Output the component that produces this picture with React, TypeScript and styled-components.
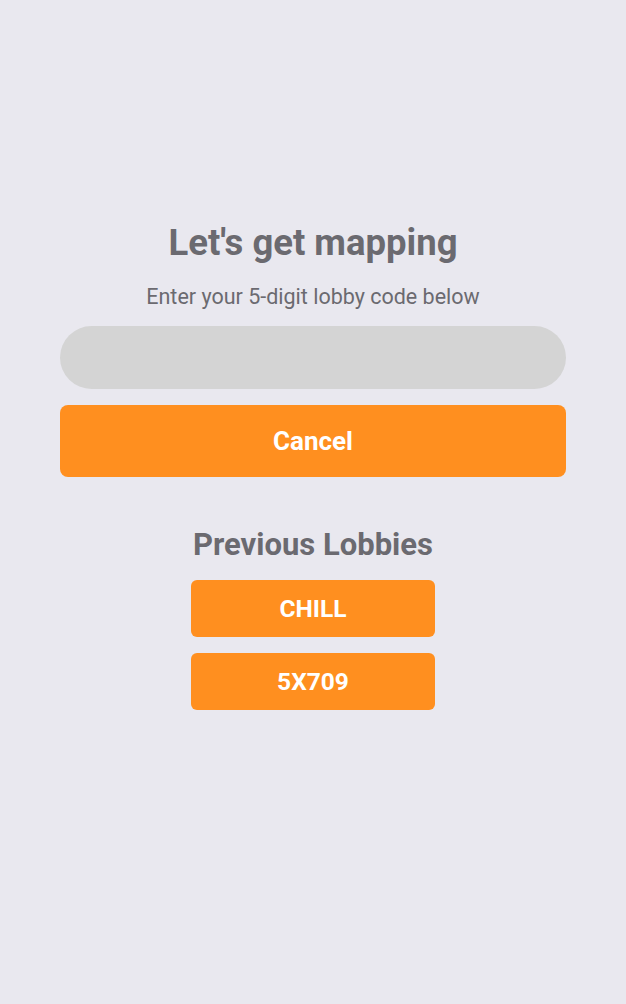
import React, { useState } from 'react';
import styled, { createGlobalStyle } from 'styled-components';

const GlobalStyle = createGlobalStyle`
  html, body {
    margin: 0;
    padding: 0;
    background-color: #e9e8ef;
    font-family: Roboto, "Liberation Sans", sans-serif;
  }
`;

const App = () => {
  const [code, setCode] = useState('');
  const lobbies = ['CHILL', '5X709'];

  return (
    <StyledPage>
      <GlobalStyle />
      <h1 className="title">Let's get mapping</h1>
      <p className="subtitle">Enter your 5-digit lobby code below</p>
      <input
        className="code-input"
        value={code}
        maxLength={5}
        onChange={(e) => setCode(e.currentTarget.value)}
      />
      <button className="cancel-button">Cancel</button>

      <h2 className="previous-header">Previous Lobbies</h2>
      <div className="lobby-list">
        {lobbies.map((lobby) => (
          <LobbyButton key={lobby}>{lobby}</LobbyButton>
        ))}
      </div>
    </StyledPage>
  );
};

export default App;

const StyledPage = styled.div`
  display: flex;
  flex-direction: column;
  align-items: center;
  box-sizing: border-box;
  min-height: 1004px;
  padding: 220px 60px 0;

  .title {
    margin: 0;
    font-size: 36.5px;
    font-weight: 700;
    line-height: 46px;
    color: #6b6a70;
  }

  .subtitle {
    margin: 18px 0 0;
    font-size: 21.5px;
    line-height: 26px;
    color: #6b6a70;
  }

  .code-input {
    box-sizing: border-box;
    margin-top: 16px;
    width: 100%;
    height: 63px;
    border: none;
    border-radius: 32px;
    background-color: #d4d4d4;
    padding: 0 24px;
    font-size: 22px;
    font-family: inherit;
    outline: none;
  }

  .cancel-button {
    margin-top: 16px;
    width: 100%;
    height: 72px;
    border: none;
    border-radius: 8px;
    background-color: #ff8f1f;
    color: white;
    font-family: inherit;
    font-size: 26px;
    font-weight: 700;
  }

  .previous-header {
    margin: 50px 0 0;
    font-size: 31px;
    font-weight: 700;
    line-height: 36px;
    color: #6b6a70;
  }

  .lobby-list {
    display: flex;
    flex-direction: column;
    gap: 16px;
    margin-top: 17px;
  }
`;

const LobbyButton = styled.button`
  width: 244px;
  height: 57px;
  border: none;
  border-radius: 6px;
  background-color: #ff8f1f;
  color: white;
  font-family: inherit;
  font-size: 24.5px;
  font-weight: 700;
`;
